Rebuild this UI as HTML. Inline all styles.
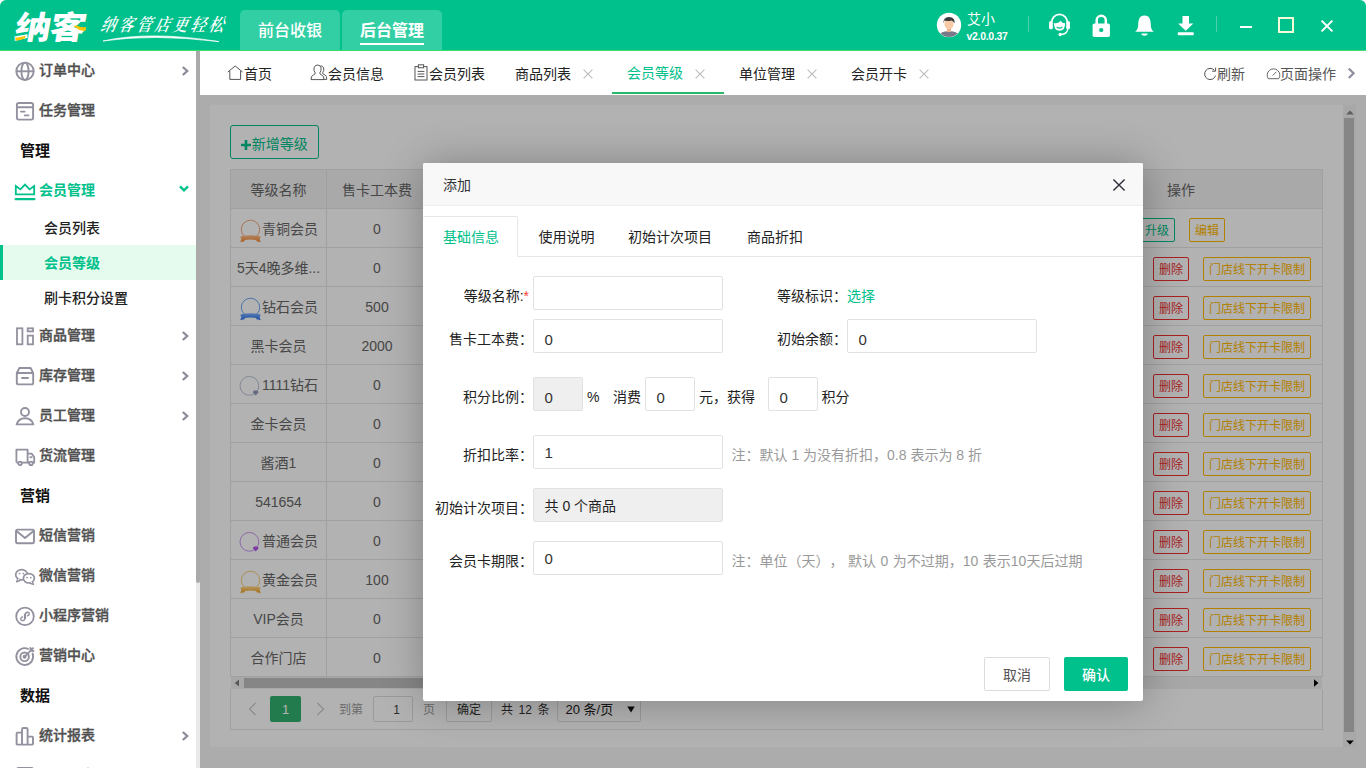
<!DOCTYPE html>
<html lang="zh-CN">
<head>
<meta charset="utf-8">
<title>纳客 - 会员等级</title>
<style>
*{box-sizing:border-box;margin:0;padding:0}
html,body{width:1366px;height:768px;overflow:hidden;background:#fff}
body{text-spacing-trim:space-all;font-family:"Liberation Sans","Noto Sans CJK SC",sans-serif;font-size:14px;color:#333;position:relative}
.abs{position:absolute}
/* ---------- header ---------- */
#hd{z-index:5;position:absolute;left:0;top:0;width:1366px;height:51px;border-radius:6px 6px 0 0;background:#00c08b;border-bottom:1px solid #3fdc72}
#logo{position:absolute;left:12px;top:10px;font-family:"Liberation Sans","Noto Sans CJK SC",sans-serif;font-weight:900;font-size:32px;line-height:36px;color:#fff;transform:skewX(-10deg) scaleX(1.13);transform-origin:0 100%;letter-spacing:-1px;white-space:nowrap}
#slogan{position:absolute;left:101px;top:14px;font-family:"Liberation Serif","Noto Serif CJK SC",serif;font-weight:600;font-size:15px;line-height:22px;color:#fff;letter-spacing:3px;font-style:italic;transform:skewX(-12deg) scaleY(1.180);transform-origin:0 50%;white-space:nowrap}
.htab{position:absolute;top:10px;height:40px;width:100px;background:#33cfa4;border-radius:5px 5px 0 0;color:#fff;font-size:16px;line-height:42px;text-align:center;font-weight:500}
.htab b{font-weight:700;border-bottom:2px solid #fff;padding-bottom:4px}
#uname{position:absolute;left:967px;top:10px;font-size:14px;line-height:18px;color:#fff}
#uver{position:absolute;left:966.500px;top:28.500px;font-size:10.500px;line-height:14px;color:#fff;font-weight:700;letter-spacing:-0.300px}
.vsep{position:absolute;top:16px;width:1px;height:16px;background:#4dd2ae}
/* ---------- sidebar ---------- */
#sb{position:absolute;left:0;top:50px;width:196px;height:718px;background:#fff;overflow:hidden}
.mi{position:absolute;left:0;width:196px;height:40px;line-height:40px;font-size:14px;font-weight:500;color:#505050;-webkit-text-stroke:0.350px #505050;padding-left:39px;white-space:nowrap}
.mi svg.ic{position:absolute;left:14px;top:10px;width:22px;height:22px}
.mi .ar{position:absolute;left:180px;top:15px;width:10px;height:12px}
.sec{position:absolute;left:20px;font-size:15px;font-weight:700;color:#111;height:40px;line-height:42px}
.sub{position:absolute;left:0;width:196px;height:35px;line-height:37px;font-size:14px;font-weight:500;color:#222;padding-left:44px}
.sub.on{background:#e5fbee;color:#00c08b;font-weight:700;border-left:3px solid #00c08b;padding-left:41px}
#sbscroll{position:absolute;left:196px;top:51px;width:4px;height:717px;background:#e9e9e9}
#sbscroll i{position:absolute;left:0;top:0;width:4px;height:532px;background:#aaa;border-radius:0 0 2px 2px}
/* ---------- tab bar ---------- */
#tb{position:absolute;left:200px;top:51px;width:1166px;height:44px;background:#fff}
.tt{position:absolute;top:0;height:44px;line-height:46px;font-size:14px;color:#222;white-space:nowrap}
.tt.on{color:#00c08b}
.tx{position:absolute;top:17.500px;width:10px;height:10px}
/* ---------- content ---------- */
#ct{position:absolute;left:200px;top:95px;width:1166px;height:673px;background:#f6f6f6;overflow:hidden}
#panel{position:absolute;left:10px;top:10px;width:1146px;height:642px;background:#fff;border-radius:2px}
#mask{position:absolute;left:200px;top:95px;width:1166px;height:673px;background:rgba(0,0,0,.3)}

/* ---------- table ---------- */
#addbtn{position:absolute;left:20px;top:20px;width:89px;height:34px;border:1px solid #00c08b;border-radius:3px;color:#00c08b;font-size:14px;line-height:36px;text-align:center;white-space:nowrap}
#tbl{position:absolute;left:20px;top:64px;width:1093px;height:508px;border:1px solid #e6e6e6;border-bottom:0}
#tbl .hr{position:absolute;left:0;top:0;width:1091px;height:39px;background:#f2f2f2;border-bottom:1px solid #e6e6e6}
#tbl .r{position:absolute;left:0;width:1091px;height:39px;border-bottom:1px solid #e6e6e6}
#tbl .c1,#tbl .c2,#tbl .c3{position:absolute;top:0;height:38px;line-height:40px;text-align:center;color:#666;font-size:14px;white-space:nowrap;overflow:hidden}
#tbl .c1{left:0;width:96px;border-right:1px solid #e6e6e6}
#tbl .c2{left:96px;width:101px;border-right:1px solid #e6e6e6}
#tbl .c3{left:811px;width:280px}
.lv{display:inline-block;vertical-align:top;width:21px;height:24px;margin:10px 1px 0 1px}
.bt{position:absolute;top:9px;height:24px;line-height:24px;border:1px solid;border-radius:2px;font-size:12px;text-align:center;background:transparent}
.bt.g{color:#00c08b;border-color:#00c08b}.bt.y{color:#ffb800;border-color:#ffb800}.bt.rd{color:#f0302f;border-color:#f0302f}
#hsb{position:absolute;left:21px;top:572px;width:1091px;height:12px;background:#f1f1f1}
#hsb i{position:absolute;left:13px;top:1px;width:760px;height:10px;background:#c1c1c1}
#pg{position:absolute;left:20px;top:584px;width:1093px;height:41px;border:1px solid #e6e6e6;border-top:0}
#pg *{position:absolute;font-size:12px;white-space:nowrap}
#vsb{position:absolute;left:1133px;top:0;width:13px;height:642px;background:#f1f1f1}
#vsb i{position:absolute;left:1px;top:13px;width:10px;height:614px;background:#c1c1c1}

/* ---------- modal ---------- */
#md{position:absolute;left:423px;top:163px;width:720px;height:538px;background:#fff;border-radius:2px;box-shadow:1px 1px 42px rgba(0,0,0,.28)}
#mdt{position:absolute;left:0;top:0;width:720px;height:43px;background:#f8f8f8;border-bottom:1px solid #eee;border-radius:2px 2px 0 0;line-height:44px;padding-left:20px;font-size:14px;color:#333}
#mtabs{position:absolute;left:0;top:53px;width:720px;height:41px;border-bottom:1px solid #e6e6e6}
#mtabs span{position:absolute;top:0;line-height:42px;font-size:14px;color:#222;white-space:nowrap}
#mtabs .on{left:0;width:95px;height:41px;border:1px solid #e6e6e6;border-left:0;border-bottom-color:#fff;border-radius:2px 2px 0 0;color:#00c08b;padding-left:20px;background:#fff;line-height:40px}
.lb{position:absolute;width:110px;text-align:right;font-size:14px;line-height:20px;color:#222;white-space:nowrap}
.ip{position:absolute;height:34px;border:1px solid #e2e2e2;border-radius:2px;background:#fff;font-size:15px;line-height:40px;padding-left:10.500px;color:#333;white-space:nowrap}
.ip.dis{background:#efefef}
.tx14{position:absolute;font-size:14px;line-height:20px;color:#222;white-space:nowrap}
.nt{position:absolute;font-size:14px;line-height:20px;color:#999;white-space:nowrap}
</style>
</head>
<body>
<svg width="0" height="0" style="position:absolute"><defs>
<linearGradient id="gO" x1="0" y1="0" x2="0" y2="1"><stop offset="0" stop-color="#ffc08e"/><stop offset="1" stop-color="#f5842c"/></linearGradient>
<linearGradient id="gB" x1="0" y1="0" x2="0" y2="1"><stop offset="0" stop-color="#7fb2ff"/><stop offset="1" stop-color="#2a70e8"/></linearGradient>
<linearGradient id="gY" x1="0" y1="0" x2="0" y2="1"><stop offset="0" stop-color="#ffd98a"/><stop offset="1" stop-color="#f0a020"/></linearGradient>
</defs></svg>
<div id="hd">
<div id="logo">纳客</div>
<svg class="abs" style="left:14px;top:22px" width="74" height="20" viewBox="0 0 74 20"><path d="M1.200 15.600 Q6 15.800 11.600 13.800 L10.800 16.200 Q6 18.800 1.600 18.600Z" fill="#ffc400"/><path d="M59.400 4 Q62 3.200 64 4 Q67.600 6 72.200 5 L71.600 8.600 Q66.400 9.400 63.600 7 Q61.600 5.200 59.400 4Z" fill="#ffc400"/></svg>
<div id="slogan">纳客管店更轻松</div>
<svg class="abs" style="left:100px;top:33px" width="125" height="12" viewBox="0 0 125 12"><path d="M3 8 Q50 -2.500 119 8.600 Q52 0.600 3 8Z" fill="#fff" stroke="#fff" stroke-width="0.700"/></svg>
<div class="htab" style="left:240px">前台收银</div>
<div class="htab" style="left:342px"><b>后台管理</b></div>
<svg class="abs" style="left:936px;top:12px" width="26" height="26" viewBox="0 0 26 26"><defs><clipPath id="avc"><circle cx="13" cy="13" r="12"/></clipPath></defs><circle cx="13" cy="13" r="12.2" fill="#fff"/><g clip-path="url(#avc)"><path d="M2 26 Q3 19 13 19 Q23 19 24 26Z" fill="#77798a"/><rect x="11" y="15" width="4" height="5" fill="#e8b48f"/><ellipse cx="13" cy="12" rx="4.6" ry="5.4" fill="#f7c9a4"/><path d="M7.6 11.5 Q7 5 13 5 Q19.4 5 18.4 11.5 Q17.5 8.6 15.5 8.4 Q11 9.4 8.6 8.6 Q7.9 9.6 7.6 11.5Z" fill="#3a3a3a"/></g></svg>
<div id="uname">艾小</div>
<div id="uver">v2.0.0.37</div>
<div class="vsep" style="left:1028px"></div>
<svg class="abs" style="left:1048px;top:10px" width="23" height="28" viewBox="0 0 22 24" preserveAspectRatio="none"><path d="M3.2 11.5 A7.8 7.8 0 0 1 18.8 11.5" fill="none" stroke="#fff" stroke-width="1.6"/><rect x="1" y="9.5" width="3.6" height="7" rx="1.6" fill="#fff"/><rect x="17.4" y="9.5" width="3.6" height="7" rx="1.6" fill="#fff"/><path d="M5.6 11.2 Q9 12.2 12.2 9.2 Q13.6 11.6 16.4 11.4 Q16.6 17.6 11 17.8 Q5.6 17.6 5.6 11.2Z" fill="#fff"/><path d="M8.3 14.6 Q11 16.6 13.7 14.6" stroke="#00c08b" stroke-width="1" fill="none"/><path d="M19 16 Q18.6 20.6 12.4 21" fill="none" stroke="#fff" stroke-width="1.3"/><circle cx="11.6" cy="21" r="1.5" fill="#fff"/></svg>
<svg class="abs" style="left:1091.400px;top:12.700px" width="20.500" height="25.500" viewBox="0 0 18 23" preserveAspectRatio="none"><path d="M5 10 V6.5 A4 4 0 0 1 13 6.5 V10" fill="none" stroke="#fff" stroke-width="2.2"/><rect x="1.4" y="9.4" width="15.2" height="12.2" rx="1.6" fill="#fff"/><circle cx="9" cy="15.4" r="1.9" fill="#00c08b"/></svg>
<svg class="abs" style="left:1133.800px;top:13.900px" width="21" height="24.500" viewBox="0 0 18 22" preserveAspectRatio="none"><path d="M9 1.4 C4.4 1.4 3.6 6 3.6 9.6 C3.6 13.2 2.4 14.6 1 16 L17 16 C15.6 14.6 14.4 13.2 14.4 9.6 C14.4 6 13.6 1.4 9 1.4Z" fill="#fff"/><path d="M6.4 17.6 H11.6 V18.4 Q9 20.6 6.4 18.4Z" fill="#fff"/></svg>
<svg class="abs" style="left:1175.900px;top:15px" width="19.500" height="21" viewBox="0 0 18 20" preserveAspectRatio="none"><path d="M6 1 H12 V8 H16 L9 15 L2 8 H6Z" fill="#fff"/><rect x="1.6" y="16.4" width="14.8" height="2.8" rx="0.8" fill="#fff"/></svg>
<div class="vsep" style="left:1216px"></div>
<div class="abs" style="left:1240px;top:26px;width:12px;height:2px;background:#fff"></div>
<div class="abs" style="left:1278px;top:17px;width:16px;height:16px;border:2px solid #f4fbd8"></div>
<svg class="abs" style="left:1319.600px;top:19.300px" width="14" height="14" viewBox="0 0 14 14"><path d="M1.6 1.6 L12.4 12.4 M12.4 1.6 L1.6 12.4" stroke="#fff" stroke-width="2"/></svg>
</div>
<div id="sb">
<div class="mi" style="top:0px"><svg class="ic" viewBox="0 0 22 22"><g fill="none" stroke="#92919f" stroke-width="1.900"><circle cx="11" cy="11.3" r="8.7"/><ellipse cx="11" cy="11.3" rx="3.6" ry="8.7"/><path d="M2.3 11.3 H19.7"/></g></svg>订单中心<svg class="ar" viewBox="0 0 10 12"><path d="M2.800 2 L7.200 6 L2.800 10" fill="none" stroke="#8d8c9b" stroke-width="2.300"/></svg></div>
<div class="mi" style="top:40px"><svg class="ic" viewBox="0 0 22 22"><g fill="none" stroke="#92919f" stroke-width="1.900" stroke-linecap="round"><rect x="2.9" y="3" width="16.2" height="16.6" rx="1.8"/><path d="M3 7.2 H19"/><path d="M7 11.6 H10.6 M10.8 15.4 H14.4"/></g></svg>任务管理</div>
<div class="sec" style="top:80px">管理</div>
<div class="mi" style="top:120px;color:#00c08b;font-weight:700;-webkit-text-stroke:0"><svg class="ic" viewBox="0 0 22 22"><g fill="none" stroke="#00c08b" stroke-width="1.8"><path d="M1.8 6 L6.4 9.4 L11 4.6 L15.6 9.4 L20.2 6 V14.4 H1.8Z" stroke-linejoin="miter"/><path d="M1.600 19.200 H20.400" stroke-width="2.200" stroke-linecap="round"/></g></svg>会员管理<svg class="ar" style="left:179px;top:13px" viewBox="0 0 10 12"><path d="M1 3.400 L5 7.400 L9 3.400" fill="none" stroke="#00c08b" stroke-width="2.400"/></svg></div>
<div class="sub" style="top:160px">会员列表</div>
<div class="sub on" style="top:195px">会员等级</div>
<div class="sub" style="top:230px">刷卡积分设置</div>
<div class="mi" style="top:265px"><svg class="ic" viewBox="0 0 22 22"><g fill="none" stroke="#92919f" stroke-width="1.800"><rect x="3" y="3.300" width="5.400" height="16"/><rect x="13.700" y="3.300" width="5.300" height="3.100"/><rect x="13.700" y="10.600" width="5.300" height="8.700"/></g></svg>商品管理<svg class="ar" viewBox="0 0 10 12"><path d="M2.800 2 L7.200 6 L2.800 10" fill="none" stroke="#8d8c9b" stroke-width="2.300"/></svg></div>
<div class="mi" style="top:305px"><svg class="ic" viewBox="0 0 22 22"><g fill="none" stroke="#92919f" stroke-width="1.900" stroke-linecap="round" stroke-linejoin="round"><path d="M2.8 8 L5.4 3 H16.6 L19.2 8"/><rect x="2.8" y="8" width="16.4" height="11.4" rx="1.6"/><path d="M8 13 H14"/></g></svg>库存管理<svg class="ar" viewBox="0 0 10 12"><path d="M2.800 2 L7.200 6 L2.800 10" fill="none" stroke="#8d8c9b" stroke-width="2.300"/></svg></div>
<div class="mi" style="top:345px"><svg class="ic" viewBox="0 0 22 22"><g fill="none" stroke="#92919f" stroke-width="1.900" stroke-linejoin="round"><circle cx="11" cy="7" r="4"/><path d="M2.6 19.4 Q4.4 13.2 11 13.2 Q17.6 13.2 19.4 19.4Z"/></g></svg>员工管理<svg class="ar" viewBox="0 0 10 12"><path d="M2.800 2 L7.200 6 L2.800 10" fill="none" stroke="#8d8c9b" stroke-width="2.300"/></svg></div>
<div class="mi" style="top:385px"><svg class="ic" viewBox="0 0 22 22"><g fill="none" stroke="#92919f" stroke-width="1.800" stroke-linejoin="round"><path d="M2.4 17.6 V4.6 H13.6 V17.6"/><path d="M13.6 8.6 H17.6 L20.2 12 V17.6 H13.6"/><path d="M15.6 12.2 H18.4"/><path d="M2.4 17.6 H20.2"/><circle cx="6" cy="18.4" r="1.7" fill="#fff"/><circle cx="17" cy="18.4" r="1.7" fill="#fff"/></g></svg>货流管理</div>
<div class="sec" style="top:425px">营销</div>
<div class="mi" style="top:465px"><svg class="ic" viewBox="0 0 22 22"><g fill="none" stroke="#92919f" stroke-width="1.900" stroke-linejoin="round"><rect x="2" y="4.6" width="18" height="13.6" rx="1.6"/><path d="M2.4 6 L11 13 L19.6 6"/></g></svg>短信营销</div>
<div class="mi" style="top:505px"><svg class="ic" viewBox="0 0 22 22"><g fill="#fff" stroke="#92919f" stroke-width="1.700" stroke-linejoin="round"><path d="M4 13.800 L2.800 16.600 L6 15.200 Z"/><ellipse cx="7.600" cy="9.800" rx="5.900" ry="5.100"/><path d="M4.300 13.600 L3.500 15.600 L5.800 14.600 Z" stroke="none"/><path d="M18 16.800 L19.300 19.300 L16.200 18.200 Z"/><ellipse cx="14.900" cy="13.300" rx="5.500" ry="4.700"/><path d="M17.600 16.600 L18.400 18.300 L16.400 17.600 Z" stroke="none"/></g><g fill="#92919f"><circle cx="5.600" cy="8.600" r="0.900"/><circle cx="9.400" cy="8.600" r="0.900"/><circle cx="13" cy="12.600" r="0.850"/><circle cx="16.800" cy="12.600" r="0.850"/></g></svg>微信营销</div>
<div class="mi" style="top:545px"><svg class="ic" viewBox="0 0 22 22"><g fill="none" stroke="#92919f" stroke-width="1.800" stroke-linecap="round"><circle cx="11" cy="11.4" r="8.8"/><path d="M11.4 13.6 V9.4 Q11.4 7.2 13.4 7.2 Q15.4 7.4 15.2 9.2 Q15 10.6 13.6 10.8" stroke-width="1.4"/><path d="M10.6 9.2 V13.4 Q10.6 15.6 8.6 15.6 Q6.6 15.4 6.8 13.6 Q7 12.2 8.4 12" stroke-width="1.4"/></g></svg>小程序营销</div>
<div class="mi" style="top:585px"><svg class="ic" viewBox="0 0 22 22"><g fill="none" stroke="#92919f" stroke-width="1.900" stroke-linecap="round"><path d="M18.6 8.6 A8.4 8.4 0 1 1 14 3.8"/><circle cx="10.6" cy="11.8" r="4.3"/><circle cx="10.6" cy="11.8" r="1" fill="#92919f"/><path d="M10.8 11.6 L19 3.2 M16.4 3 L16.8 5.6 L19.4 6"/></g></svg>营销中心</div>
<div class="sec" style="top:625px">数据</div>
<div class="mi" style="top:665px"><svg class="ic" viewBox="0 0 22 22"><g fill="none" stroke="#92919f" stroke-width="1.900" stroke-linejoin="round"><path d="M2.600 19.600 V8.400 Q2.600 7.600 3.400 7.600 H8 V19.600 M8 19.600 V4.400 Q8 3 9.400 3 H12.200 Q13.600 3 13.600 4.400 V19.600 M13.600 11.600 H18.200 Q19 11.600 19 12.400 V18.800 Q19 19.600 18.200 19.600 H3.400 Q2.600 19.600 2.600 18.800"/></g></svg>统计报表<svg class="ar" viewBox="0 0 10 12"><path d="M2.800 2 L7.200 6 L2.800 10" fill="none" stroke="#8d8c9b" stroke-width="2.300"/></svg></div>
<div class="mi" style="top:705px"><svg class="ic" viewBox="0 0 22 22"><g fill="none" stroke="#92919f" stroke-width="1.900"><rect x="3" y="3" width="16" height="17" rx="1.6"/></g></svg>财务报表<svg class="ar" viewBox="0 0 10 12"><path d="M2.800 2 L7.200 6 L2.800 10" fill="none" stroke="#8d8c9b" stroke-width="2.300"/></svg></div>
</div>
<div id="sbscroll"><i></i></div>
<div id="tb">
<svg class="abs" style="left:27px;top:14px" width="17" height="16" viewBox="0 0 17 16"><path d="M0.8 7 L8.2 1 L15.6 7 M2.8 6 V14.4 H13.6 V6" fill="none" stroke="#555" stroke-width="1"/></svg>
<div class="tt" style="left:44px">首页</div>
<svg class="abs" style="left:110px;top:13px" width="18" height="17" viewBox="0 0 18 17"><g fill="#fff" stroke="#555" stroke-width="1"><path d="M9.4 2.4 Q12 1 13.6 3.6 Q14.4 6.6 12.6 8.8 Q12.6 10.2 15 11 Q16.8 11.8 16.8 15.4 H12"/><path d="M1 15.6 Q1 11.6 3.6 10.8 Q5.6 10 5.2 8.8 Q3.4 6.600 4 3.800 Q5 1 7.600 1 Q10.4 1 11 3.800 Q11.600 6.600 9.800 8.800 Q9.400 10 11.400 10.800 Q14 11.600 14 15.600Z"/></g></svg>
<div class="tt" style="left:128px">会员信息</div>
<svg class="abs" style="left:214px;top:13px" width="14" height="17" viewBox="0 0 14 17"><g fill="none" stroke="#555" stroke-width="1"><rect x="1" y="2.6" width="12" height="13.4"/><rect x="4.4" y="0.8" width="5.2" height="3" fill="#fff"/><path d="M3.600 7.400 H10.400 M3.600 10 H10.400 M3.600 12.600 H10.400"/></g></svg>
<div class="tt" style="left:229px">会员列表</div>
<div class="tt" style="left:315px">商品列表</div><svg class="tx" style="left:383px" viewBox="0 0 10 10"><path d="M0.6 0.6 L9.4 9.4 M9.4 0.6 L0.6 9.4" stroke="#bdbdbd" stroke-width="1.1"/></svg>
<div class="tt on" style="left:427px;top:-1px">会员等级</div><svg class="tx" style="left:495px" viewBox="0 0 10 10"><path d="M0.6 0.6 L9.4 9.4 M9.4 0.6 L0.6 9.4" stroke="#bdbdbd" stroke-width="1.1"/></svg>
<div class="abs" style="left:412px;top:41px;width:112px;height:2px;background:#26b76b"></div>
<div class="tt" style="left:539px">单位管理</div><svg class="tx" style="left:607px" viewBox="0 0 10 10"><path d="M0.6 0.6 L9.4 9.4 M9.4 0.6 L0.6 9.4" stroke="#bdbdbd" stroke-width="1.1"/></svg>
<div class="tt" style="left:651px">会员开卡</div><svg class="tx" style="left:719px" viewBox="0 0 10 10"><path d="M0.6 0.6 L9.4 9.4 M9.4 0.6 L0.6 9.4" stroke="#bdbdbd" stroke-width="1.1"/></svg>
<svg class="abs" style="left:1003px;top:16px" width="15" height="14" viewBox="0 0 15 14"><path d="M11.4 3.200 A5.600 5.600 0 1 0 12.600 8.600" fill="none" stroke="#555" stroke-width="1"/><path d="M12.600 0.600 V4.200 H9" fill="none" stroke="#555" stroke-width="1"/></svg>
<div class="tt" style="left:1017px;color:#555">刷新</div>
<svg class="abs" style="left:1066px;top:16px" width="15" height="13" viewBox="0 0 15 13"><path d="M2.300 11.700 A6.300 6.300 0 1 1 12.700 11.700 Z" fill="none" stroke="#666" stroke-width="1"/><path d="M6.600 8.600 L10.400 4.800" stroke="#666" stroke-width="1"/></svg>
<div class="tt" style="left:1080px;color:#555">页面操作</div>
<svg class="abs" style="left:1147px;top:16px" width="9" height="13" viewBox="0 0 9 13"><path d="M1.800 1.600 L6.600 6.300 L1.800 11" fill="none" stroke="#8e8ea0" stroke-width="2.200"/></svg>
</div>
<div id="ct"><div id="panel">
<div id="addbtn"><svg width="10" height="10" viewBox="0 0 10 10" style="vertical-align:-0.500px;margin-right:0.500px"><path d="M5 0 V10 M0 5 H10" stroke="#00c08b" stroke-width="2.600"/></svg>新增等级</div>
<div id="tbl">
<div class="hr"><div class="c1">等级名称</div><div class="c2">售卡工本费</div><div class="c3" style="text-align:left;padding-left:125px">操作</div></div>
<div class="r" style="top:39px"><div class="c1"><svg class="lv" viewBox="0 0 21 24"><circle cx="10.5" cy="10.400" r="9.200" fill="none" stroke="#f0a070" stroke-width="0.9"/><path d="M0.300 17.400 Q10.500 15.200 20.700 17.400 L19.700 20.200 L20.700 23.200 Q18 22.400 16.400 22.300 L16.200 21 Q10.500 20.200 4.800 21 L4.600 22.300 Q3 22.400 0.300 23.200 L1.300 20.200Z" fill="url(#gO)"/></svg>青铜会员</div><div class="c2">0</div><div class="c3"><span class="bt g" style="left:97px;width:36px">升级</span><span class="bt y" style="left:147px;width:36px">编辑</span></div></div>
<div class="r" style="top:78px"><div class="c1">5天4晚多维...</div><div class="c2">0</div><div class="c3"><span class="bt rd" style="left:111px;width:36px">删除</span><span class="bt y" style="left:161px;width:108px">门店线下开卡限制</span></div></div>
<div class="r" style="top:117px"><div class="c1"><svg class="lv" viewBox="0 0 21 24"><circle cx="10.5" cy="10.400" r="9.200" fill="none" stroke="#5b9cf0" stroke-width="0.9"/><path d="M0.300 17.400 Q10.500 15.200 20.700 17.400 L19.700 20.200 L20.700 23.200 Q18 22.400 16.400 22.300 L16.200 21 Q10.500 20.200 4.800 21 L4.600 22.300 Q3 22.400 0.300 23.200 L1.300 20.200Z" fill="url(#gB)"/></svg>钻石会员</div><div class="c2">500</div><div class="c3"><span class="bt rd" style="left:111px;width:36px">删除</span><span class="bt y" style="left:161px;width:108px">门店线下开卡限制</span></div></div>
<div class="r" style="top:156px"><div class="c1">黑卡会员</div><div class="c2">2000</div><div class="c3"><span class="bt rd" style="left:111px;width:36px">删除</span><span class="bt y" style="left:161px;width:108px">门店线下开卡限制</span></div></div>
<div class="r" style="top:195px"><div class="c1"><svg class="lv" viewBox="0 0 21 24" style="overflow:visible"><circle cx="9.400" cy="10.850" r="9.400" fill="none" stroke="#b3bbd2" stroke-width="0.900"/><path d="M12.800 17.200 L14 15.600 L17.400 15.600 L18.600 17.200 L15.700 20.600Z" fill="#8e98b8"/></svg>1111钻石</div><div class="c2">0</div><div class="c3"><span class="bt rd" style="left:111px;width:36px">删除</span><span class="bt y" style="left:161px;width:108px">门店线下开卡限制</span></div></div>
<div class="r" style="top:234px"><div class="c1">金卡会员</div><div class="c2">0</div><div class="c3"><span class="bt rd" style="left:111px;width:36px">删除</span><span class="bt y" style="left:161px;width:108px">门店线下开卡限制</span></div></div>
<div class="r" style="top:273px"><div class="c1">酱酒1</div><div class="c2">0</div><div class="c3"><span class="bt rd" style="left:111px;width:36px">删除</span><span class="bt y" style="left:161px;width:108px">门店线下开卡限制</span></div></div>
<div class="r" style="top:312px"><div class="c1">541654</div><div class="c2">0</div><div class="c3"><span class="bt rd" style="left:111px;width:36px">删除</span><span class="bt y" style="left:161px;width:108px">门店线下开卡限制</span></div></div>
<div class="r" style="top:351px"><div class="c1"><svg class="lv" viewBox="0 0 21 24" style="overflow:visible"><circle cx="9.400" cy="10.850" r="9.400" fill="none" stroke="#c58af0" stroke-width="0.900"/><path d="M12.800 17.200 L14 15.600 L17.400 15.600 L18.600 17.200 L15.700 20.600Z" fill="#b455e8"/></svg>普通会员</div><div class="c2">0</div><div class="c3"><span class="bt rd" style="left:111px;width:36px">删除</span><span class="bt y" style="left:161px;width:108px">门店线下开卡限制</span></div></div>
<div class="r" style="top:390px"><div class="c1"><svg class="lv" viewBox="0 0 21 24"><circle cx="10.5" cy="10.400" r="9.200" fill="none" stroke="#f3c66a" stroke-width="0.9"/><path d="M0.300 17.400 Q10.500 15.200 20.700 17.400 L19.700 20.200 L20.700 23.200 Q18 22.400 16.400 22.300 L16.200 21 Q10.500 20.200 4.800 21 L4.600 22.300 Q3 22.400 0.300 23.200 L1.300 20.200Z" fill="url(#gY)"/></svg>黄金会员</div><div class="c2">100</div><div class="c3"><span class="bt rd" style="left:111px;width:36px">删除</span><span class="bt y" style="left:161px;width:108px">门店线下开卡限制</span></div></div>
<div class="r" style="top:429px"><div class="c1">VIP会员</div><div class="c2">0</div><div class="c3"><span class="bt rd" style="left:111px;width:36px">删除</span><span class="bt y" style="left:161px;width:108px">门店线下开卡限制</span></div></div>
<div class="r" style="top:468px"><div class="c1">合作门店</div><div class="c2">0</div><div class="c3"><span class="bt rd" style="left:111px;width:36px">删除</span><span class="bt y" style="left:161px;width:108px">门店线下开卡限制</span></div></div>
</div>
<div id="hsb"><i></i><svg class="abs" style="left:3px;top:2px" width="6" height="8" viewBox="0 0 6 8"><path d="M5 0.400 V7.600 L0.800 4Z" fill="#7d7d7d"/></svg><svg class="abs" style="left:1082px;top:2px" width="6" height="8" viewBox="0 0 6 8"><path d="M1 0.200 V7.800 L5.400 4Z" fill="#000"/></svg></div>
<div id="pg">
<svg style="left:17px;top:13px" width="9" height="14" viewBox="0 0 9 14"><path d="M7.600 1 L1.400 7 L7.600 13" fill="none" stroke="#c8c8c8" stroke-width="1.1"/></svg>
<div style="left:39px;top:7px;width:31px;height:26px;background:#32b06d;border-radius:2px;color:#fff;text-align:center;line-height:27px;font-size:13px">1</div>
<svg style="left:85px;top:13px" width="9" height="14" viewBox="0 0 9 14"><path d="M1.400 1 L7.600 7 L1.400 13" fill="none" stroke="#c8c8c8" stroke-width="1.1"/></svg>
<div style="left:108px;top:7px;line-height:28px;color:#999">到第</div>
<div style="left:142px;top:7px;width:40px;height:26px;border:1px solid #ddd;border-radius:2px;text-align:center;line-height:26px;color:#444;padding-left:7px">1</div>
<div style="left:192px;top:7px;line-height:28px;color:#999">页</div>
<div style="left:215px;top:7px;width:46px;height:26px;border:1px solid #ddd;border-radius:2px;text-align:center;line-height:26px;color:#333">确定</div>
<div style="left:270px;top:7px;line-height:28px;color:#333;word-spacing:2.200px">共 12 条</div>
<div style="left:326px;top:7px;width:84px;height:26px;border:1px solid #ddd;border-radius:2px;line-height:26px;color:#222;padding-left:7.500px;font-size:13px">20 条/页</div>
<svg style="left:396px;top:17px" width="8" height="7" viewBox="0 0 7 7" preserveAspectRatio="none"><path d="M0.200 0.600 H6.800 L3.500 6.400Z" fill="#111"/></svg>
</div>
<div id="vsb"><i></i><svg class="abs" style="left:3px;top:5px" width="8" height="5" viewBox="0 0 8 5"><path d="M0.200 4.600 H7.800 L4 0.400Z" fill="#858585"/></svg><svg class="abs" style="left:3px;top:635px" width="8" height="5" viewBox="0 0 8 5"><path d="M0.200 0.400 H7.800 L4 4.600Z" fill="#000"/></svg></div>
</div></div>
<div id="mask"></div>
<div id="md">
<div id="mdt">添加</div>
<svg class="abs" style="left:689px;top:15px" width="14" height="14" viewBox="0 0 14 14"><path d="M1.400 1.400 L12.600 12.600 M12.600 1.400 L1.400 12.600" stroke="#2e2e3a" stroke-width="1.400"/></svg>
<div id="mtabs"><span class="on">基础信息</span><span style="left:115.500px">使用说明</span><span style="left:205px">初始计次项目</span><span style="left:324px">商品折扣</span></div>
<div class="lb" style="left:0;top:123px;width:110px;padding-right:4px">等级名称:<i style="color:#ff3b30;font-style:normal">*</i></div>
<div class="ip" style="left:110px;top:113px;width:190px"></div>
<div class="lb" style="left:314px;top:123px">等级标识：</div>
<div class="tx14" style="left:424px;top:123px;color:#00c08b">选择</div>
<div class="lb" style="left:0;top:166px">售卡工本费：</div>
<div class="ip" style="left:110px;top:156px;width:190px">0</div>
<div class="lb" style="left:314px;top:166px">初始余额：</div>
<div class="ip" style="left:424px;top:156px;width:190px">0</div>
<div class="lb" style="left:0;top:224px">积分比例：</div>
<div class="ip dis" style="left:110px;top:214px;width:50px">0</div>
<div class="tx14" style="left:164px;top:224px">%</div>
<div class="tx14" style="left:190px;top:224px">消费</div>
<div class="ip" style="left:222px;top:214px;width:50px">0</div>
<div class="tx14" style="left:276px;top:224px">元，获得</div>
<div class="ip" style="left:345px;top:214px;width:50px">0</div>
<div class="tx14" style="left:398.500px;top:224px">积分</div>
<div class="lb" style="left:0;top:282px">折扣比率：</div>
<div class="ip" style="left:110px;top:272px;width:190px;line-height:34px">1</div>
<div class="nt" style="left:308.500px;top:282px">注：默认 1 为没有折扣，0.8 表示为 8 折</div>
<div class="lb" style="left:0;top:335px">初始计次项目：</div>
<div class="ip dis" style="left:110px;top:325px;width:190px;font-size:14px;line-height:35px;color:#222">共 0 个商品</div>
<div class="lb" style="left:0;top:388px">会员卡期限：</div>
<div class="ip" style="left:110px;top:378px;width:190px;line-height:34px">0</div>
<div class="nt" style="left:308.500px;top:388px;word-spacing:0.600px">注：单位（天）， 默认 0 为不过期，10 表示10天后过期</div>
<div class="abs" style="left:561px;top:494px;width:66px;height:34px;border:1px solid #dcdcdc;border-radius:2px;font-size:14px;line-height:35px;text-align:center;color:#555;background:#fff">取消</div>
<div class="abs" style="left:641px;top:494px;width:64px;height:34px;border-radius:2px;font-size:14px;line-height:36px;text-align:center;color:#fff;font-weight:500;background:#00c08b">确认</div>
</div>
</body>
</html>
